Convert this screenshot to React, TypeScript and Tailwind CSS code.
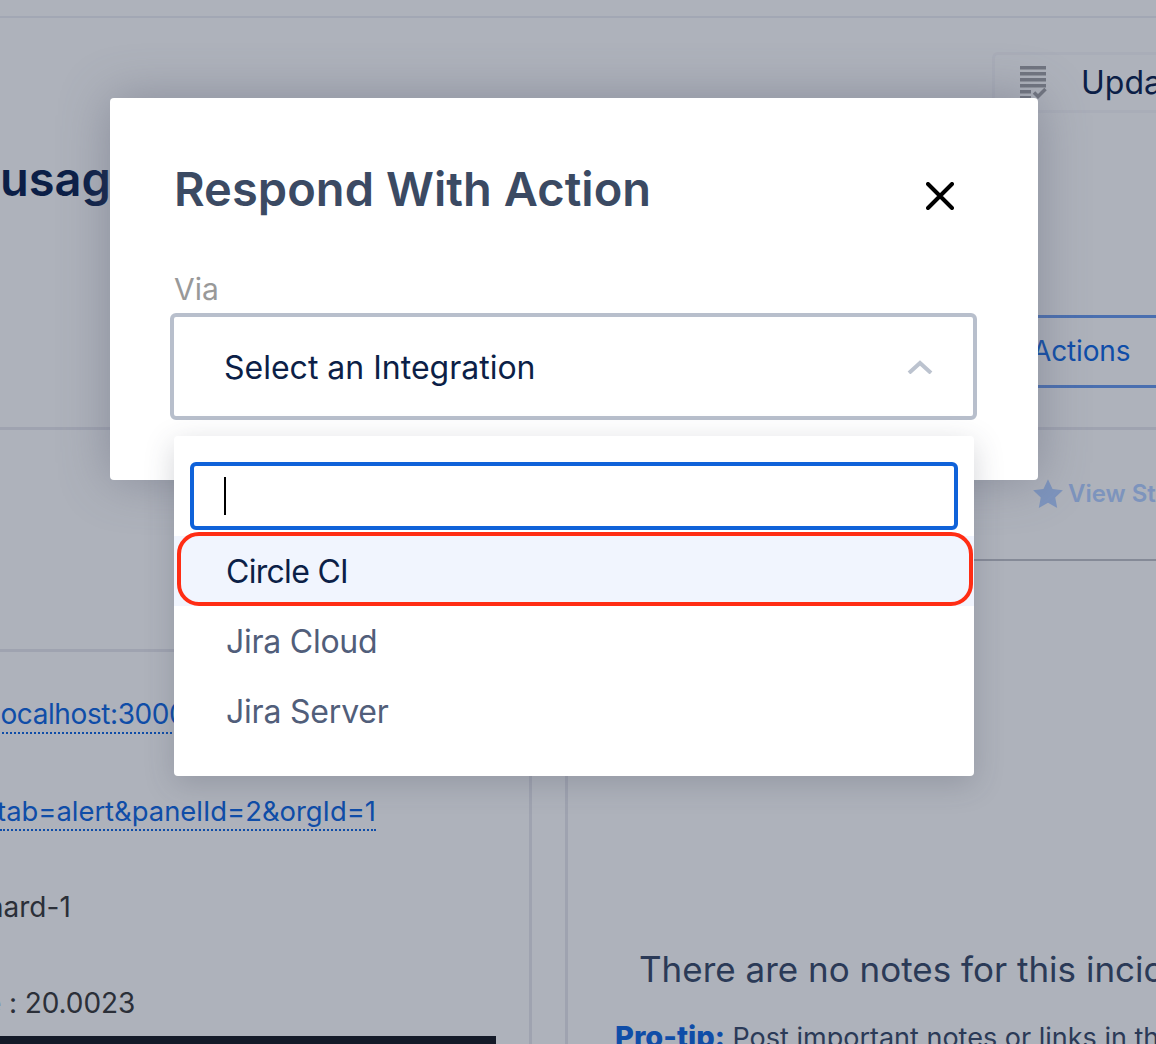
import React from "react";

const font = { fontFamily: "Inter, 'Noto Sans', sans-serif" };

function ChecklistIcon() {
  return (
    <svg width="30" height="34" viewBox="0 0 30 34" className="block shrink-0">
      <g fill="#70747f">
        <rect x="2" y="0" width="26" height="3.5" />
        <rect x="2" y="6" width="26" height="3.5" />
        <rect x="2" y="12" width="26" height="3.5" />
        <rect x="2" y="18" width="26" height="3.5" />
        <rect x="2" y="24" width="11" height="3.5" />
        <rect x="2" y="30" width="11" height="3.5" />
      </g>
      <path d="M16 26.5l4 4 7.5-7.5" fill="none" stroke="#70747f" strokeWidth="3.5" />
    </svg>
  );
}

function Background() {
  return (
    <div className="flex h-full flex-col">
      <div className="h-[18px] shrink-0 border-b-2 border-[#a2a7b4]" />
      <div className="flex h-[412px] shrink-0 justify-between border-b-[3px] border-[#9fa3b0]">
        <div className="pt-[135px] text-[47px] leading-[52px] font-semibold text-[#0c1f47]">usage</div>
        <div className="flex w-[164px] flex-col">
          <div className="mt-[34px] flex h-[61px] items-center overflow-hidden rounded-l-md border-y-[3px] border-l-[3px] border-[#a9adb8] pl-[23px]">
            <ChecklistIcon />
            <span className="ml-[33px] text-[32px] whitespace-nowrap text-[#0c1f47]">Update</span>
          </div>
          <div className="-ml-[60px] mt-[202px] flex h-[73px] items-center border-y-[3px] border-[#4a6fb0] pb-[2px] pl-[100px]">
            <span className="text-[28px] tracking-[-0.15px] text-[#0f4da8]">Actions</span>
          </div>
        </div>
      </div>
      <div className="flex min-h-0 flex-1">
        <div className="w-[532px] shrink-0 border-r-[3px] border-[#9fa3b0]">
          <div className="h-[222px] border-b-[3px] border-[#9fa3b0]" />
          <div className="mt-[44px] -ml-[6px] w-fit border-b-2 border-dotted border-[#0f4da8] text-[28px] leading-[36px] tracking-[-0.4px] whitespace-nowrap text-[#0f4da8]">
            localhost:3000/d/dashboard
          </div>
          <div className="mt-[59px] flex w-[376px] justify-end overflow-hidden border-b-2 border-dotted border-[#0f4da8] text-[27.4px] leading-[36px] whitespace-nowrap text-[#0f4da8]">
            tab=alert&amp;panelId=2&amp;orgId=1
          </div>
          <div className="mt-[58px] -ml-[13px] text-[28px] leading-[36px] text-[#2b2f38]">hard-1</div>
          <div className="mt-[60px] -ml-[15px] text-[28px] leading-[36px] tracking-[-0.1px] text-[#2b2f38]">e : 20.0023</div>
          <div className="mt-[15px] h-[10px] w-[496px] bg-[#141a28]" />
        </div>
        <div className="ml-[33px] min-w-0 flex-1 border-l-[3px] border-[#9fa3b0]">
          <div className="h-[131px] border-b-2 border-[#858a97] pt-[46px] pl-[463px]">
            <div className="flex items-center whitespace-nowrap">
              <svg width="34" height="34" viewBox="0 0 24 24" className="shrink-0" fill="#7d94bd">
                <path d="M12 1.5l3.2 6.9 7.3.9-5.4 5.1 1.4 7.4-6.5-3.7-6.5 3.7 1.4-7.4L1.5 9.3l7.3-.9z" />
              </svg>
              <span className="ml-[3px] text-[24px] font-semibold text-[#7d94bd]">View Status</span>
            </div>
          </div>
          <div className="pt-[385px] pl-[71px] text-[35px] leading-[46px] whitespace-nowrap text-[#2b3a57]">
            There are no notes for this incident
          </div>
          <div className="mt-[29px] pl-[47px] text-[27px] leading-[32px] whitespace-nowrap text-[#2b3a57]">
            <span className="text-[29px] font-extrabold text-[#0f4da8]">Pro-tip:</span> Post important notes or links in the
          </div>
        </div>
      </div>
    </div>
  );
}

function Modal() {
  return (
    <div className="absolute top-[98px] left-[110px] h-[382px] w-[928px] rounded bg-white pt-[61px] pl-[61px] shadow-[0_0_50px_rgba(90,95,115,0.45)]">
      <div className="flex items-start justify-between pr-[84px]">
        <h2 className="ml-[3px] text-[47px] leading-[60px] font-semibold tracking-[0.05px] text-[#3b4a63]">Respond With Action</h2>
        <svg width="28" height="28" viewBox="0 0 28 28" className="mt-[23px]" fill="none" stroke="#000" strokeWidth="4" strokeLinecap="round">
          <path d="M2 2l24 24M26 2L2 26" />
        </svg>
      </div>
      <div className="mt-[52px] ml-[3px] text-[30px] leading-[36px] text-[#999999]">Via</div>
      <div className="mt-[6px] -ml-px flex h-[107px] w-[807px] items-center justify-between rounded-md border-4 border-[#b8bfcc] pt-[3px] pr-[40px] pl-[50px]">
        <span className="text-[32px] text-[#0c1f47]">Select an Integration</span>
        <svg width="26" height="14" viewBox="0 0 26 14" className="-mt-[3px]" fill="none" stroke="#bcc3cf" strokeWidth="4">
          <path d="M2 13L13 3l11 10" />
        </svg>
      </div>
    </div>
  );
}

function Dropdown() {
  return (
    <div className="absolute top-[436px] left-[174px] h-[340px] w-[800px] rounded-[4px] bg-white pt-[26px] shadow-[0_8px_30px_rgba(60,65,80,0.22)]">
      <div className="mx-4 flex h-[68px] w-[768px] items-center rounded-md border-4 border-[#0f62d9] pl-[30px]">
        <div className="h-[38px] w-[2px] bg-black" />
      </div>
      <div className="mt-[6px] flex h-[70px] items-center bg-[#f1f5fe] pt-[2px] pl-[52px] text-[32px] tracking-[-0.7px] text-[#0c1f47]">Circle CI</div>
      <div className="flex h-[70px] items-center pt-[2px] pl-[52px] text-[32px] tracking-[-0.25px] text-[#515e7a]">Jira Cloud</div>
      <div className="flex h-[70px] items-center pt-[2px] pl-[52px] text-[32px] tracking-[-0.2px] text-[#515e7a]">Jira Server</div>
    </div>
  );
}

export default function App() {
  return (
    <div style={font} className="relative h-[1044px] w-[1156px] overflow-hidden bg-[#aeb2bb]">
      <Background />
      <Modal />
      <Dropdown />
      <div className="absolute top-[532px] left-[177px] h-[74px] w-[796px] rounded-[22px] border-4 border-[#ff2d14]" />
    </div>
  );
}
